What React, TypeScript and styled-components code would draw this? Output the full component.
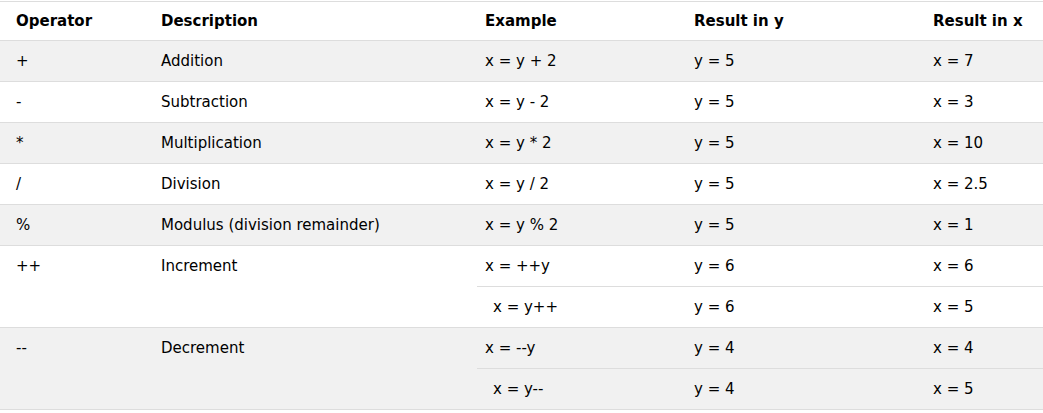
import React from "react";
import styled, { createGlobalStyle } from "styled-components";

const GlobalStyle = createGlobalStyle`
  html, body {
    margin: 0;
    padding: 0;
    background: #ffffff;
  }
  body {
    font-family: "DejaVu Sans", Verdana, sans-serif;
    font-size: 15px;
    color: #000000;
  }
`;

const Page = styled.div`
  padding-top: 1px;
  width: 1043px;
`;

const Table = styled.table`
  width: 100%;
  border-collapse: collapse;
  border-spacing: 0;
  table-layout: fixed;
  border-top: 1px solid #dddddd;
`;

const HeadRow = styled.tr`
  background: #ffffff;
  border-bottom: 1px solid #dddddd;
`;

const Row = styled.tr<{ $shade?: boolean }>`
  background: ${(p) => (p.$shade ? "#f1f1f1" : "#ffffff")};
`;

const Th = styled.th`
  text-align: left;
  font-weight: bold;
  padding: 0 8px;
  height: 39px;
  box-sizing: border-box;
  vertical-align: middle;
  white-space: nowrap;
  &:first-child {
    padding-left: 16px;
  }
`;

const Td = styled.td<{ $indent?: boolean }>`
  padding: 0 8px 0 ${(p) => (p.$indent ? "16px" : "8px")};
  vertical-align: middle;
  white-space: nowrap;
  border-bottom: 1px solid #dddddd;
  height: 41px;
  box-sizing: border-box;
`;

const SpanTd = styled(Td)`
  vertical-align: top;
  padding-top: 11px;
`;

const FirstTd = styled(SpanTd)`
  padding-left: 16px;
`;

type Simple = { op: string; desc: string; ex: string; y: string; x: string };

const simple: Simple[] = [
  { op: "+", desc: "Addition", ex: "x = y + 2", y: "y = 5", x: "x = 7" },
  { op: "-", desc: "Subtraction", ex: "x = y - 2", y: "y = 5", x: "x = 3" },
  { op: "*", desc: "Multiplication", ex: "x = y * 2", y: "y = 5", x: "x = 10" },
  { op: "/", desc: "Division", ex: "x = y / 2", y: "y = 5", x: "x = 2.5" },
  { op: "%", desc: "Modulus (division remainder)", ex: "x = y % 2", y: "y = 5", x: "x = 1" },
];

type Double = {
  op: string;
  desc: string;
  rows: { ex: string; y: string; x: string; indent?: boolean }[];
};

const doubles: Double[] = [
  {
    op: "++",
    desc: "Increment",
    rows: [
      { ex: "x = ++y", y: "y = 6", x: "x = 6" },
      { ex: "x = y++", y: "y = 6", x: "x = 5", indent: true },
    ],
  },
  {
    op: "--",
    desc: "Decrement",
    rows: [
      { ex: "x = --y", y: "y = 4", x: "x = 4" },
      { ex: "x = y--", y: "y = 4", x: "x = 5", indent: true },
    ],
  },
];

export default function App() {
  return (
    <>
      <GlobalStyle />
      <Page>
        <Table>
          <colgroup>
            <col style={{ width: 153 }} />
            <col style={{ width: 324 }} />
            <col style={{ width: 209 }} />
            <col style={{ width: 239 }} />
            <col style={{ width: 118 }} />
          </colgroup>
          <thead>
            <HeadRow>
              <Th>Operator</Th>
              <Th>Description</Th>
              <Th>Example</Th>
              <Th>Result in y</Th>
              <Th>Result in x</Th>
            </HeadRow>
          </thead>
          <tbody>
            {simple.map((r, i) => (
              <Row key={r.op} $shade={i % 2 === 0}>
                <FirstTd>{r.op}</FirstTd>
                <SpanTd>{r.desc}</SpanTd>
                <Td>{r.ex}</Td>
                <Td>{r.y}</Td>
                <Td>{r.x}</Td>
              </Row>
            ))}
            {doubles.map((d, di) => (
              <React.Fragment key={d.op}>
                <Row $shade={di === 1}>
                  <FirstTd rowSpan={2}>{d.op}</FirstTd>
                  <SpanTd rowSpan={2}>{d.desc}</SpanTd>
                  <Td>{d.rows[0].ex}</Td>
                  <Td>{d.rows[0].y}</Td>
                  <Td>{d.rows[0].x}</Td>
                </Row>
                <Row $shade={di === 1}>
                  <Td $indent={d.rows[1].indent}>{d.rows[1].ex}</Td>
                  <Td>{d.rows[1].y}</Td>
                  <Td>{d.rows[1].x}</Td>
                </Row>
              </React.Fragment>
            ))}
          </tbody>
        </Table>
      </Page>
    </>
  );
}
